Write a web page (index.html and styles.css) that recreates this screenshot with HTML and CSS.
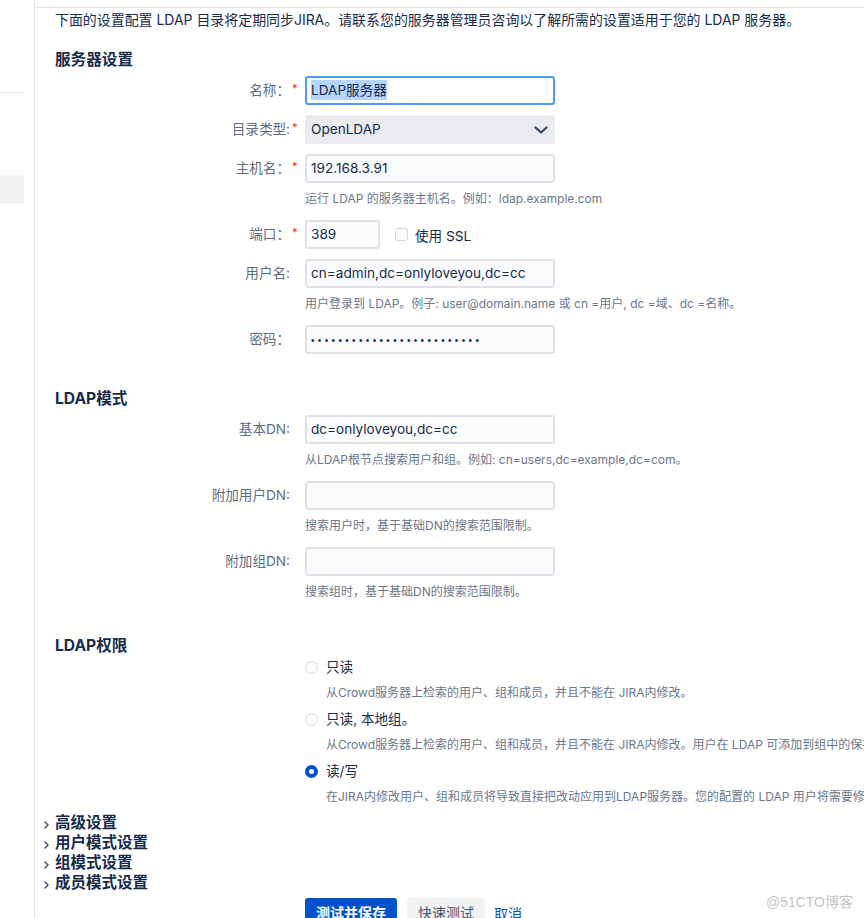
FILE: index.html
```html
<!DOCTYPE html>
<html lang="zh-CN">
<head>
<meta charset="utf-8">
<title>LDAP 目录配置</title>
<link rel="stylesheet" href="styles.css">
</head>
<body>
<div class="page">
  <aside class="sidebar">
    <div class="side-rule"></div>
    <div class="side-item"></div>
  </aside>
  <main class="main">
    <div class="content">
      <p class="intro">下面的设置配置 LDAP 目录将定期同步JIRA。请联系您的服务器管理员咨询以了解所需的设置适用于您的 LDAP 服务器。</p>

      <section class="section s-server">
        <h2 class="section-title">服务器设置</h2>
        <div class="fields">
          <div class="field">
            <label class="label">名称：<span class="req">*</span></label>
            <div class="control">
              <div class="input wide focus"><span class="sel">LDAP服务器</span></div>
            </div>
          </div>
          <div class="field">
            <label class="label">目录类型:<span class="req">*</span></label>
            <div class="control">
              <div class="input wide select"><span>OpenLDAP</span>
                <svg class="chev" width="14" height="8" viewBox="0 0 14 8"><polyline points="1.5,1.5 7,6.5 12.5,1.5" fill="none" stroke="#344563" stroke-width="2.2" stroke-linecap="round" stroke-linejoin="round"/></svg>
              </div>
            </div>
          </div>
          <div class="field">
            <label class="label">主机名：<span class="req">*</span></label>
            <div class="control">
              <div class="input wide">192.168.3.91</div>
              <div class="desc">运行 LDAP 的服务器主机名。例如：ldap.example.com</div>
            </div>
          </div>
          <div class="field">
            <label class="label">端口：<span class="req">*</span></label>
            <div class="control inline">
              <div class="input port">389</div>
              <span class="checkbox"></span>
              <span class="check-label">使用 SSL</span>
            </div>
          </div>
          <div class="field">
            <label class="label">用户名:</label>
            <div class="control">
              <div class="input wide">cn=admin,dc=onlyloveyou,dc=cc</div>
              <div class="desc">用户登录到 LDAP。例子: user@domain.name 或 cn =用户, dc =域、dc =名称。</div>
            </div>
          </div>
          <div class="field">
            <label class="label">密码：</label>
            <div class="control">
              <div class="input wide"><span class="dots">•••••••••••••••••••••••••</span></div>
            </div>
          </div>
        </div>
      </section>

      <section class="section s-schema">
        <h2 class="section-title">LDAP模式</h2>
        <div class="fields">
          <div class="field">
            <label class="label">基本DN:</label>
            <div class="control">
              <div class="input wide">dc=onlyloveyou,dc=cc</div>
              <div class="desc">从LDAP根节点搜索用户和组。例如: cn=users,dc=example,dc=com。</div>
            </div>
          </div>
          <div class="field">
            <label class="label">附加用户DN:</label>
            <div class="control">
              <div class="input wide"></div>
              <div class="desc">搜索用户时，基于基础DN的搜索范围限制。</div>
            </div>
          </div>
          <div class="field">
            <label class="label">附加组DN:</label>
            <div class="control">
              <div class="input wide"></div>
              <div class="desc">搜索组时，基于基础DN的搜索范围限制。</div>
            </div>
          </div>
        </div>
      </section>

      <section class="section s-perm">
        <h2 class="section-title">LDAP权限</h2>
        <div class="radio-group">
          <div class="radio-item">
            <div class="radio-row"><span class="radio"></span><span>只读</span></div>
            <div class="radio-desc">从Crowd服务器上检索的用户、组和成员，并且不能在 JIRA内修改。</div>
          </div>
          <div class="radio-item">
            <div class="radio-row"><span class="radio"></span><span>只读, 本地组。</span></div>
            <div class="radio-desc">从Crowd服务器上检索的用户、组和成员，并且不能在 JIRA内修改。用户在 LDAP 可添加到组中的保持在内部目录中。</div>
          </div>
          <div class="radio-item">
            <div class="radio-row"><span class="radio checked"></span><span>读/写</span></div>
            <div class="radio-desc">在JIRA内修改用户、组和成员将导致直接把改动应用到LDAP服务器。您的配置的 LDAP 用户将需要修改 LDAP 服务器的权限。</div>
          </div>
        </div>
      </section>

      <div class="toggles">
        <div class="toggle"><svg class="tchev" width="5" height="8" viewBox="0 0 5 8"><polyline points="1,1 4,4 1,7" fill="none" stroke="#42526e" stroke-width="1.5" stroke-linecap="round" stroke-linejoin="round"/></svg><span>高级设置</span></div>
        <div class="toggle"><svg class="tchev" width="5" height="8" viewBox="0 0 5 8"><polyline points="1,1 4,4 1,7" fill="none" stroke="#42526e" stroke-width="1.5" stroke-linecap="round" stroke-linejoin="round"/></svg><span>用户模式设置</span></div>
        <div class="toggle"><svg class="tchev" width="5" height="8" viewBox="0 0 5 8"><polyline points="1,1 4,4 1,7" fill="none" stroke="#42526e" stroke-width="1.5" stroke-linecap="round" stroke-linejoin="round"/></svg><span>组模式设置</span></div>
        <div class="toggle"><svg class="tchev" width="5" height="8" viewBox="0 0 5 8"><polyline points="1,1 4,4 1,7" fill="none" stroke="#42526e" stroke-width="1.5" stroke-linecap="round" stroke-linejoin="round"/></svg><span>成员模式设置</span></div>
      </div>

      <div class="buttons">
        <button class="btn btn-primary" type="button">测试并保存</button>
        <button class="btn btn-default" type="button">快速测试</button>
        <a class="cancel" href="#">取消</a>
      </div>
    </div>
  </main>
  <div class="watermark">@51CTO博客</div>
</div>
</body>
</html>
```

FILE: styles.css
```css
html, body {
  margin: 0;
  padding: 0;
  overflow: hidden;
  background: #ffffff;
}

body {
  font-family: Inter, "Noto Sans CJK SC", sans-serif;
  font-size: 13.6px;
  color: #172b4d;
}

.page {
  position: relative;
  display: flex;
  height: 918px;
  overflow: hidden;
}

/* left navigation remnant */
.sidebar {
  width: 24px;
  padding-right: 10px;
  border-right: 1px solid #e1e2e5;
  flex-shrink: 0;
}

.side-rule {
  margin-top: 92px;
  height: 1px;
  background: #e1e2e5;
}

.side-item {
  margin-top: 82px;
  height: 29px;
  background: #f0f1f3;
}

.main {
  flex: 1;
  min-width: 0;
  padding-top: 7px;
  overflow: hidden;
}

.content {
  border-top: 1px solid #e1e2e5;
  padding-left: 20px;
  display: flex;
  flex-direction: column;
}

.intro {
  margin: 2px 0 0;
  font-size: 13.95px;
  line-height: 20px;
  white-space: nowrap;
  color: #172b4d;
}

.section {
  display: flex;
  flex-direction: column;
}

.s-server { margin-top: 20px; }
.s-schema { margin-top: 35px; }
.s-perm { margin-top: 33px; }

.section-title {
  margin: 0;
  font-size: 15.6px;
  line-height: 20px;
  font-weight: 700;
  color: #172b4d;
}

.fields {
  margin-top: 6px;
  display: flex;
  flex-direction: column;
  gap: 10px;
}

.field {
  display: grid;
  grid-template-columns: 235px 1fr;
  column-gap: 15px;
}

.label {
  text-align: right;
  line-height: 29px;
  color: #5e6c84;
  white-space: nowrap;
}

.req {
  display: inline-block;
  width: 0;
  text-indent: 2px;
  color: #de350b;
  font-size: 11px;
  vertical-align: top;
  line-height: 25px;
}

.control {
  display: flex;
  flex-direction: column;
  min-width: 0;
}

.control.inline {
  flex-direction: row;
  align-items: center;
}

.input {
  box-sizing: border-box;
  height: 29px;
  border: 2px solid #dfe1e6;
  border-radius: 3px;
  background: #fafbfc;
  padding: 0 4px;
  line-height: 25px;
  color: #172b4d;
  white-space: nowrap;
  overflow: hidden;
}

.input.wide { width: 250px; }
.input.port { width: 75px; }

.input.focus {
  border-color: #4c9aff;
  background: #ffffff;
}

.sel {
  background: #b4d5fe;
  padding: 2px 0;
}

.input.select {
  display: flex;
  align-items: center;
  justify-content: space-between;
  background: #ebecf0;
  border-color: #ebecf0;
  padding-right: 5px;
}

.chev { display: block; }

.dots {
  font-family: "Liberation Sans", sans-serif;
  font-size: 10px;
  letter-spacing: 3.35px;
  color: #172b4d;
}

.checkbox {
  box-sizing: border-box;
  width: 13px;
  height: 13px;
  margin-left: 15px;
  border: 1px solid #d3d7dd;
  border-radius: 3px;
  background: #fafbfc;
}

.check-label {
  margin-left: 7px;
  color: #172b4d;
}

.desc {
  margin-top: 5px;
  line-height: 22px;
  font-size: 12px;
  color: #6b778c;
  white-space: nowrap;
}

/* permissions */
.radio-group {
  margin-top: 1px;
  margin-left: 250px;
  display: flex;
  flex-direction: column;
}

.radio-item {
  margin-bottom: 6px;
}

.radio-row {
  display: flex;
  align-items: center;
  line-height: 20px;
  color: #172b4d;
}

.radio {
  box-sizing: border-box;
  width: 13px;
  height: 13px;
  margin-right: 8px;
  border-radius: 50%;
  border: 1px solid #d6dae0;
  background: #fafbfc;
  flex-shrink: 0;
}

.radio.checked {
  border: 4.5px solid #0052cc;
  background: #ffffff;
}

.radio-desc {
  margin-top: 6px;
  margin-left: 21px;
  line-height: 20px;
  font-size: 12px;
  color: #6b778c;
  white-space: nowrap;
}

/* collapsible groups */
.toggles {
  display: flex;
  flex-direction: column;
}

.toggle {
  display: flex;
  align-items: center;
  margin-left: -11px;
  line-height: 20px;
  font-size: 15.5px;
  font-weight: 600;
  color: #172b4d;
}

.tchev {
  display: block;
  margin-right: 6px;
  margin-top: 4px;
}

/* buttons */
.buttons {
  margin-top: 5px;
  margin-left: 250px;
  display: flex;
  align-items: center;
}

.btn {
  height: 30px;
  padding: 0 11px;
  border: none;
  border-radius: 3px;
  font-family: Inter, "Noto Sans CJK SC", sans-serif;
  font-size: 14px;
  line-height: 30px;
}

.btn-primary {
  background: #0052cc;
  color: #ffffff;
  font-weight: 700;
}

.btn-default {
  margin-left: 10px;
  background: #f1f2f4;
  color: #42526e;
}

.cancel {
  margin-left: 9px;
  font-size: 14px;
  color: #0052cc;
  text-decoration: none;
}

.watermark {
  position: absolute;
  right: 11px;
  bottom: 6px;
  line-height: 20px;
  font-family: "Liberation Sans", "Noto Sans CJK SC", sans-serif;
  font-size: 14px;
  color: #c4c4c4;
}
```
